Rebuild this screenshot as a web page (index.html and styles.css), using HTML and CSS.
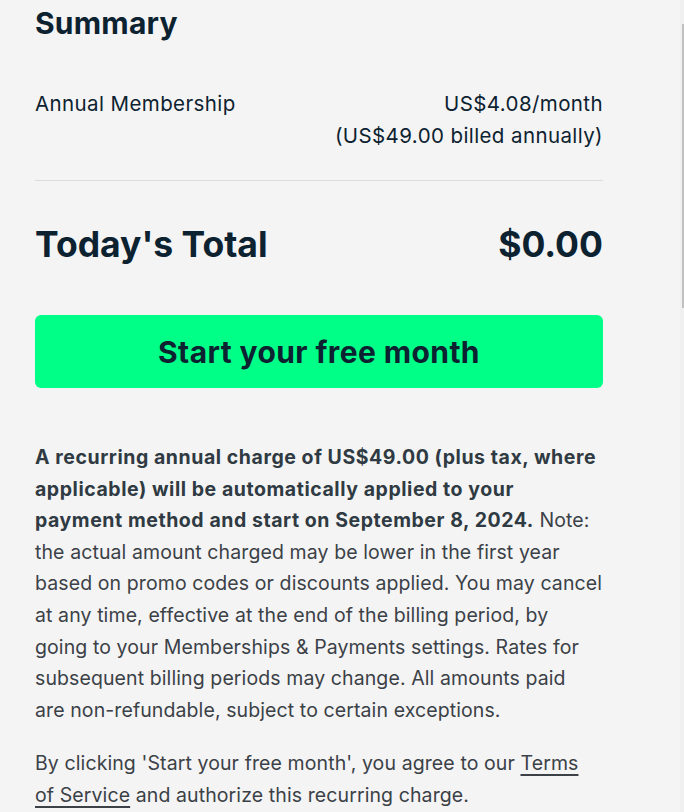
FILE: index.html
```html
<!DOCTYPE html>
<html lang="en">
<head>
    <meta charset="UTF-8">
    <meta name="viewport" content="width=device-width, initial-scale=1.0">
    <title>Summary</title>
    <link rel="stylesheet" href="styles.css">
</head>
<body>
    <div class="scrollbar"><div class="thumb"></div></div>
    <div class="container">
        <h2 class="title">Summary</h2>
        <div class="line-item">
            <span>Annual Membership</span>
            <span class="price">US$4.08/month<br>(US$49.00 billed annually)</span>
        </div>
        <div class="total">
            <span>Today's Total</span>
            <span>$0.00</span>
        </div>
        <button class="start-button">Start your free month</button>
        <p class="terms">
            <strong>A recurring annual charge of US$49.00 (plus tax, where applicable) will be automatically applied to your payment method and start on September 8, 2024.</strong>
            Note: the actual amount charged may be lower in the first year based on promo codes or discounts applied. You may cancel at any time, effective at the end of the billing period, by going to your Memberships &amp; Payments settings. Rates for subsequent billing periods may change. All amounts paid <span class="nowrap">are non-refundable,</span> subject to certain exceptions.
        </p>
        <p class="terms">
            By clicking 'Start your free month', you agree to our <a href="#">Terms of Service</a> and authorize this recurring charge.
        </p>
    </div>
</body>
</html>
```

FILE: styles.css
```css
body {
    margin: 0;
    padding: 0;
    background-color: #f4f4f4;
    font-family: Inter, "Noto Sans", sans-serif;
    color: #0d2230;
}
.container {
    width: 568px;
    padding: 0 35px;
}
.title {
    margin: 0;
    font-size: 30px;
    line-height: 47px;
    font-weight: 700;
    letter-spacing: 0.2px;
}
.line-item {
    display: flex;
    justify-content: space-between;
    margin-top: 41px;
    padding-bottom: 28px;
    border-bottom: 1px solid #dcdcdc;
    font-size: 20.5px;
    line-height: 32px;
    letter-spacing: 0.4px;
}
.price {
    text-align: right;
}
.total {
    display: flex;
    justify-content: space-between;
    margin-top: 40px;
    font-size: 35.5px;
    line-height: 48px;
    font-weight: 700;
}
.start-button {
    display: block;
    width: 100%;
    height: 73px;
    margin-top: 46px;
    border: none;
    border-radius: 6px;
    background-color: #00ff87;
    color: #0d2230;
    font-family: inherit;
    font-size: 30px;
    font-weight: 700;
    letter-spacing: 0.4px;
    cursor: pointer;
}
.terms {
    margin: 54px 0 0;
    font-size: 19.5px;
    line-height: 31.6px;
    letter-spacing: 0.1px;
    color: #3b4147;
}
.terms + .terms {
    margin-top: 22px;
}
.terms strong {
    color: #2f3a42;
    letter-spacing: 0.55px;
}
.terms a {
    color: inherit;
    text-decoration-thickness: 2px;
    text-underline-offset: 4px;
}
.nowrap {
    white-space: nowrap;
}
.scrollbar {
    position: fixed;
    top: 0;
    right: 0;
    width: 4px;
    height: 100%;
    background-color: #f0f0f0;
}
.thumb {
    margin-top: 24px;
    height: 284px;
    margin-left: 2px;
    background-color: #c1c1c1;
}
```
